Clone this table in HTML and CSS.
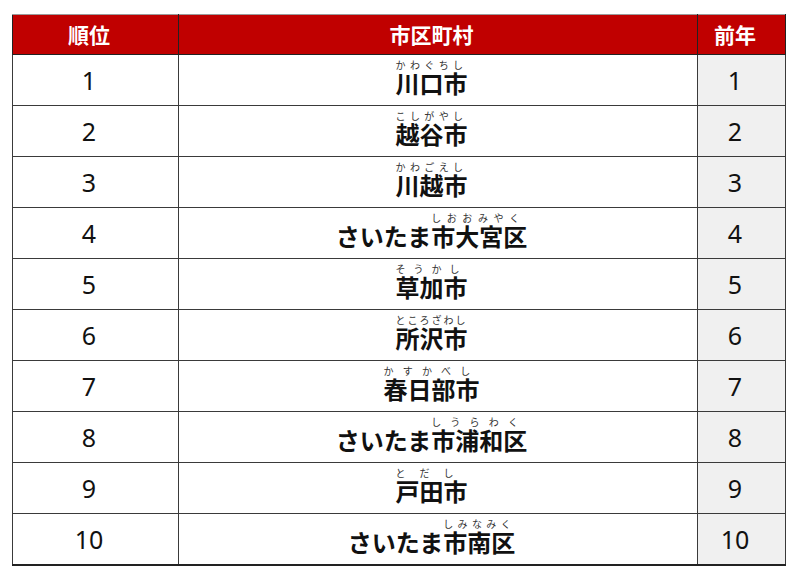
FILE: index.html
```html
<!DOCTYPE html>
<html lang="ja">
<head>
<meta charset="utf-8">
<link rel="stylesheet" href="styles.css">
</head>
<body>
<table class="rank">
  <colgroup>
    <col class="c-rank"><col class="c-city"><col class="c-prev">
  </colgroup>
  <thead>
    <tr><th>順位</th><th>市区町村</th><th>前年</th></tr>
  </thead>
  <tbody>
    <tr><td class="num">1</td><td class="city"><div class="name"><ruby>川口市<rt class="sp-4">かわぐちし</rt></ruby></div></td><td class="num prev">1</td></tr>
    <tr><td class="num">2</td><td class="city"><div class="name"><ruby>越谷市<rt class="sp-4">こしがやし</rt></ruby></div></td><td class="num prev">2</td></tr>
    <tr><td class="num">3</td><td class="city"><div class="name"><ruby>川越市<rt class="sp-4">かわごえし</rt></ruby></div></td><td class="num prev">3</td></tr>
    <tr><td class="num">4</td><td class="city"><div class="name">さいたま<ruby>市大宮区<rt class="sp-6">しおおみやく</rt></ruby></div></td><td class="num prev">4</td></tr>
    <tr><td class="num">5</td><td class="city"><div class="name"><ruby>草加市<rt class="sp-8">そうかし</rt></ruby></div></td><td class="num prev">5</td></tr>
    <tr><td class="num">6</td><td class="city"><div class="name"><ruby>所沢市<rt class="sp-2">ところざわし</rt></ruby></div></td><td class="num prev">6</td></tr>
    <tr><td class="num">7</td><td class="city"><div class="name"><ruby>春日部市<rt class="sp-9">かすかべし</rt></ruby></div></td><td class="num prev">7</td></tr>
    <tr><td class="num">8</td><td class="city"><div class="name">さいたま<ruby>市浦和区<rt class="sp-9">しうらわく</rt></ruby></div></td><td class="num prev">8</td></tr>
    <tr><td class="num">9</td><td class="city"><div class="name"><ruby>戸田市<rt class="sp-14">とだし</rt></ruby></div></td><td class="num prev">9</td></tr>
    <tr><td class="num">10</td><td class="city"><div class="name">さいたま<ruby>市南区<rt class="sp-4">しみなみく</rt></ruby></div></td><td class="num prev">10</td></tr>
  </tbody>
</table>
</body>
</html>
```
FILE: styles.css
```css
html, body {
  margin: 0;
  background: #ffffff;
}
body {
  padding: 14px 0 0 12px;
  font-family: "Noto Sans CJK JP", "Noto Sans", sans-serif;
  color: #111;
}
.rank {
  border-collapse: collapse;
  table-layout: fixed;
  width: 773px;
}
.c-rank { width: 166px; }
.c-city { width: 519px; }
.c-prev { width: 88px; }

.rank th {
  background: #c00000;
  color: #ffffff;
  font-size: 21px;
  font-weight: 700;
  height: 39px;
  padding: 0 13px 0 0;
  border: 1px solid #222;
  border-top-color: #9a9a9a;
  line-height: 1;
}
.rank td {
  height: 50px;
  padding: 0 13px 0 0;
  border: 1px solid #3a3a3a;
  text-align: center;
  vertical-align: middle;
}
.rank tbody tr:last-child td {
  border-bottom: 2px solid #222;
}
.num {
  font-family: "Noto Sans", sans-serif;
  font-size: 25px;
  line-height: 1;
  color: #111;
}
.prev {
  background: #f0f0f0;
}
.city {
  font-size: 24px;
  font-weight: 700;
}
.name {
  box-sizing: border-box;
  height: 50px;
  padding-top: 5px;
  line-height: 45px;
  overflow: visible;
  white-space: nowrap;
}
.name rt {
  font-size: 10px;
  font-weight: 400;
  color: #333;
  line-height: 1.1;
  text-align: left;
}
.sp-2 { letter-spacing: 2px; }
.sp-4 { letter-spacing: 4.4px; }
.sp-6 { letter-spacing: 5.6px; }
.sp-8 { letter-spacing: 8px; }
.sp-9 { letter-spacing: 9.2px; }
.sp-14 { letter-spacing: 14px; }
```
